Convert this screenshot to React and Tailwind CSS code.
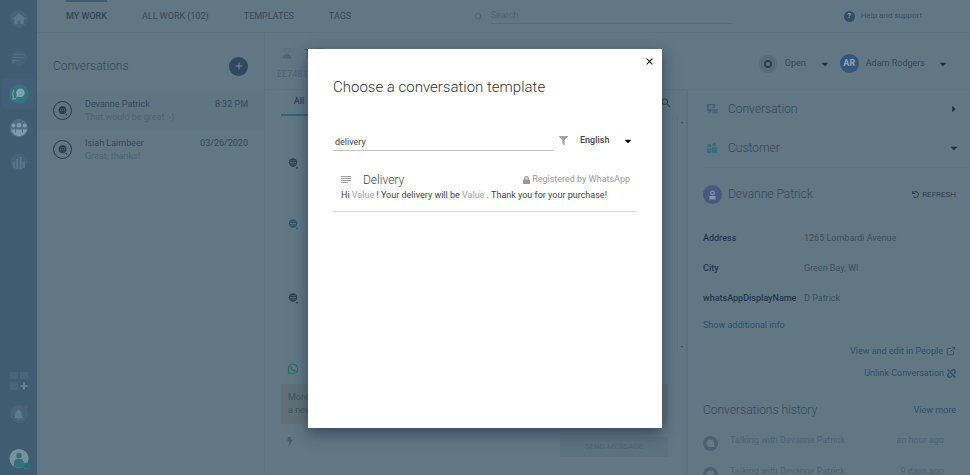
import React, { useState } from 'react';
import { FaCaretDown, FaCaretRight, FaWhatsapp, FaBolt, FaFilter, FaLock, FaUnlink, FaUndo } from 'react-icons/fa';
import { MdHome, MdNotifications, MdClose, MdSearch } from 'react-icons/md';
import { FiSearch, FiExternalLink } from 'react-icons/fi';
import { Plus } from 'lucide-react';

const tabs = ['MY WORK', 'ALL WORK (102)', 'TEMPLATES', 'TAGS'];

const conversations = [
  { name: 'Devanne Patrick', time: '8:32 PM', preview: 'That would be great :-)' },
  { name: 'Isiah Laimbeer', time: '03/26/2020', preview: 'Great, thanks!' },
];

const details = [
  { label: 'Address', value: '1265 Lombardi Avenue' },
  { label: 'City', value: 'Green Bay, WI' },
  { label: 'whatsAppDisplayName', value: 'D Patrick' },
];

const history = [
  { title: 'Talking with Devanne Patrick', when: 'an hour ago' },
  { title: 'Talking with Devanne Patrick', when: '9 days ago' },
];

// globe with a small speech tail
const ChatGlobe = ({ className }) => (
  <svg viewBox="0 0 12 12" className={className} aria-hidden="true">
    <circle cx="5.5" cy="5" r="4.6" fill="currentColor" />
    <circle cx="9.8" cy="10.6" r="1" fill="currentColor" />
    <path d="M1.8 2.900h7.400M1.800 7.200h7.400" stroke="#617784" strokeWidth="0.500" />
    <path d="M2.500 5h1.400M4.800 5h1.400M7.100 5h1.400" stroke="#8094a0" strokeWidth="1" />
  </svg>
);

const Sidebar = () => (
  <nav className="flex w-[37px] shrink-0 flex-col items-center bg-[#3f5d71]">
    <a href="#home" aria-label="Home" className="flex h-[37px] items-center">
      <span className="flex h-[18px] w-[18px] items-center justify-center rounded-full bg-[#46647a]">
        <MdHome className="h-[16px] w-[16px] text-[#5c778b]" />
      </span>
    </a>
    <a href="#messages" aria-label="Messages" className="flex h-[41px] items-center">
      <svg viewBox="0 0 18 18" className="h-[18px] w-[18px]">
        <circle cx="9" cy="9" r="8" fill="#456378" />
        <path d="M4 5.500h11M3 8.500h11M2 11.500h8" stroke="#546f85" strokeWidth="1.200" />
        <path d="M3 12l-1 3 3-2z" fill="#546f85" />
      </svg>
    </a>
    <a href="#conversations" aria-label="Conversations" className="flex h-[31px] w-[33px] items-center justify-center rounded-sm bg-[#435f77]">
      <svg viewBox="0 0 20 20" className="h-5 w-5">
        <circle cx="10" cy="10" r="9.800" fill="#2f777d" />
        <path d="M5 6a7 7 0 0 0-.5 7l-1 2 3.500-.3" fill="none" stroke="#6c98a1" strokeWidth="1.300" />
        <path d="M11.500 4.500a4.300 4.300 0 1 1-2 8.200l-2.500.8.800-2.400A4.300 4.300 0 0 1 11.500 4.500z" fill="#8aa3b2" />
        <circle cx="11.500" cy="8.800" r="2" fill="none" stroke="#6f909d" strokeWidth="0.800" />
      </svg>
    </a>
    <a href="#people" aria-label="People" className="flex h-[37px] items-center">
      <svg viewBox="0 0 20 20" className="h-5 w-5">
        <circle cx="10" cy="10" r="9.200" fill="#506e84" />
        <g fill="#8399a8">
          <circle cx="4.400" cy="7.600" r="2" />
          <circle cx="10" cy="7.200" r="2.300" />
          <circle cx="15.600" cy="7.600" r="2" />
          <path d="M2 11.500h16c-1 4.500-4.600 6.500-8 6.500s-7-2-8-6.500z" />
        </g>
        <path d="M6.500 11.500v3M13.500 11.500v3" stroke="#506e84" />
      </svg>
    </a>
    <a href="#reports" aria-label="Reports" className="flex h-[31px] items-center">
      <svg viewBox="0 0 18 18" className="h-[18px] w-[18px]">
        <circle cx="9" cy="9" r="8.500" fill="#45637a" />
        <path d="M4 15V9M7.300 16V6M10.700 16V4M14 15V8" stroke="#5c788b" strokeWidth="1.600" />
      </svg>
    </a>
    <a href="#apps" aria-label="Add app" className="mt-auto flex h-[22px] items-center">
      <svg viewBox="0 0 20 20" className="h-5 w-5">
        <g fill="#47657b">
          <path d="M1 1h8v7H1zM11 1h8v7h-8zM1 11h8v8H1z" />
        </g>
        <path d="M15 11.500v7M11.500 15h7" stroke="#6f899b" strokeWidth="1.600" />
      </svg>
    </a>
    <a href="#alerts" aria-label="Notifications" className="relative mt-[13px] flex h-[18px] w-[18px] items-center justify-center rounded-full bg-[#46647a]">
      <MdNotifications className="h-[13px] w-[13px] text-[#5f7b8e]" />
      <span className="absolute top-0 right-0 h-[4px] w-[4px] rounded-full bg-[#5a606b]" />
    </a>
    <a href="#profile" aria-label="Profile" className="mt-[25px] mb-[5px] flex h-[22px] items-center">
      <svg viewBox="0 0 22 22" className="h-[22px] w-[22px]">
        <circle cx="11" cy="10.500" r="9.600" fill="#7890a0" />
        <circle cx="11" cy="7.500" r="2.800" fill="#2f7378" />
        <path d="M6 18v-3c0-3 2-4.200 5-4.200s5 1.200 5 4.200v3c-3 2.200-7 2.200-10 0z" fill="#2f7378" />
        <circle cx="18.500" cy="18" r="2.800" fill="#3f5d71" stroke="#2f7378" strokeWidth="1.200" />
      </svg>
    </a>
  </nav>
);

const TopBar = () => (
  <header className="flex h-[33px] shrink-0 items-center border-b border-[#5b7180] pl-[29px] pr-[48px]">
    <nav className="flex h-full gap-[35px]">
      {tabs.map((tab, i) => (
        <a
          key={tab}
          href="#tab"
          className={
            i === 0
              ? 'flex items-center border-t-2 border-[#3d5c72] text-[9px] font-medium text-[#2f4556]'
              : 'flex items-center border-t-2 border-transparent text-[9px] text-[#34495a]'
          }
        >
          {tab}
        </a>
      ))}
    </nav>
    <label className="ml-auto flex items-center gap-2 text-[#465d6d]">
      <FiSearch className="h-[9px] w-[9px]" />
      <input
        type="text"
        aria-label="Search"
        placeholder="Search"
        className="h-[16px] w-[241px] border-b border-[#546c7c] pb-[2px] text-[9px] outline-none placeholder:text-[#4e6575]"
      />
    </label>
    <a href="#help" className="ml-[112px] flex items-center gap-[6px] text-[8px] text-[#3a5060]">
      <span className="flex h-[11px] w-[11px] items-center justify-center rounded-full bg-[#2c5068] text-[8px] font-bold text-[#8da1ae]">?</span>
      Help and support
    </a>
  </header>
);

const ConversationList = () => (
  <section className="w-[228px] shrink-0 border-r border-[#5b7281]">
    <div className="flex h-[57px] items-center justify-between pt-[9px] pl-4 pr-4">
      <h2 className="text-[12px] font-light text-[#34495a]">Conversations</h2>
      <button type="button" aria-label="New conversation" className="flex h-[19px] w-[19px] items-center justify-center rounded-full bg-[#2d4a61]">
        <Plus className="h-[10px] w-[10px] text-[#8599a7]" />
      </button>
    </div>
    <ul className="pt-[1px]">
      {conversations.map((c, i) => (
        <li key={c.name} className={i === 0 ? 'flex h-[39px] items-center bg-[#5f7582] px-4' : 'flex h-[39px] items-center px-4'}>
          <span className="flex h-[19px] w-[19px] shrink-0 items-center justify-center rounded-full border border-[#263a4b] text-[#223647]">
            <ChatGlobe className="h-[10px] w-[10px]" />
          </span>
          <div className="ml-[13px] flex-1 leading-[13px]">
            <div className="flex justify-between text-[9px] text-[#34495a]">
              <span>{c.name}</span>
              <span>{c.time}</span>
            </div>
            <p className="text-[9px] text-[#4b6373]">{c.preview}</p>
          </div>
        </li>
      ))}
    </ul>
  </section>
);

const AgentBar = () => (
  <div className="flex h-[57px] shrink-0 items-center border-b border-[#5d7382] pt-[5px] pl-3 pr-[23px] text-[#33495a]">
    <div className="leading-[20px]">
      <div className="flex items-center gap-3 pl-[5px] text-[12px] font-light">
        <svg viewBox="0 0 10 12" className="h-[11px] w-[10px] text-[#4d6576]" aria-hidden="true">
          <path d="M1.500 1h7C8 4 6.500 5.500 5 6 3.500 5.500 2 4 1.500 1z" fill="none" stroke="currentColor" strokeWidth="0.800" />
          <path d="M0 11.500c.5-3.500 2-5 5-5s4.500 1.500 5 5z" fill="currentColor" />
        </svg>
        Talking
      </div>
      <div className="text-[9px] text-[#4c6474]">EE7481</div>
    </div>
    <button type="button" className="ml-auto flex items-center text-[9px]">
      <span className="mr-2 flex h-[18px] w-[18px] items-center justify-center rounded-full bg-[#596c79]">
        <span className="h-[8px] w-[8px] rounded-full border-2 border-[#2c3e4d] bg-[#617784]" />
      </span>
      Open
      <FaCaretDown className="ml-[15px] h-[10px] w-[8px] text-[#1f3242]" />
    </button>
    <button type="button" className="ml-[11px] flex items-center text-[9px]">
      <span className="mr-[7px] flex h-[19px] w-[19px] items-center justify-center rounded-full bg-[#335877] text-[9px] font-bold text-[#8fa6b6]">AR</span>
      Adam Rodgers
      <FaCaretDown className="ml-[14px] h-[10px] w-[8px] text-[#1f3242]" />
    </button>
  </div>
);

const ChatPane = () => (
  <section className="flex min-w-0 flex-1 text-[9px]">
    <div className="flex min-w-0 flex-1 flex-col pl-4">
      <div className="-mr-1 flex h-[26px] shrink-0 items-center justify-between font-medium text-[#2d4454]">
        <button type="button" className="h-full w-[36px] border-b-2 border-[#35607a]">All</button>
        <MdSearch className="h-[12px] w-[12px]" />
      </div>
      <div className="flex flex-col pt-[42px] pl-[7px]">
        <ChatGlobe className="h-[11px] w-[11px] text-[#2c4152]" />
        <ChatGlobe className="mt-[50px] h-[11px] w-[11px] text-[#2f546f]" />
        <ChatGlobe className="mt-[63px] h-[11px] w-[11px] text-[#2c4152]" />
      </div>
      <FaWhatsapp className="mt-auto ml-[6px] h-[12px] w-[12px] shrink-0 text-[#1d7159]" />
      <div className="mt-[9px] border border-[#607276] bg-[#5f7177] px-[6px] py-[6px] leading-[13px] text-[#41545f]">
        More than 24 hours have passed
        <br />
        a new conversation
      </div>
      <div className="flex items-start justify-between pt-[13px] pb-[18px] pl-[6px]">
        <FaBolt className="h-[8px] w-[6px] text-[#41596a]" />
        <button type="button" disabled className="h-[20px] w-[108px] bg-[#5b7281] text-[8px] text-[#4d6475]">
          SEND MESSAGE
        </button>
      </div>
    </div>
    <div className="mt-[26px] mb-[122px] ml-[9px] flex w-[9px] flex-col items-center justify-between border-l border-[#5c7281] py-[4px] text-[#405869]">
      <FaCaretDown className="h-[5px] w-[4px] rotate-180" />
      <FaCaretDown className="h-[5px] w-[4px]" />
    </div>
  </section>
);

const CustomerPanel = () => (
  <aside className="w-[284px] shrink-0 overflow-hidden border-l-2 border-[#587080] pl-[15px] text-[9px] text-[#33495a]">
    <button type="button" className="flex h-[38px] w-full items-center pr-[13px]">
      <svg viewBox="0 0 13 13" className="ml-[3px] h-[12px] w-[12px]">
        <path d="M1 1h9v4H6v4l-3 2V9H1z" fill="#475d80" />
        <path d="M3 3.500h5M3 5.500h3" stroke="#718796" />
        <path d="M7 6.500h6v4.500h-2l-2 1.500V11H7z" fill="#2f7478" />
      </svg>
      <span className="ml-[10px] text-[12px] font-light">Conversation</span>
      <FaCaretRight className="ml-auto h-[10px] w-[6px] text-[#1f3242]" />
    </button>
    <button type="button" className="flex h-[39px] w-full items-center pr-[12px]">
      <svg viewBox="0 0 13 13" className="ml-[3px] h-[12px] w-[12px]">
        <circle cx="3.500" cy="4" r="2" fill="#3d6580" />
        <circle cx="9" cy="2.500" r="2" fill="#2f7478" />
        <path d="M1 7h5v5H1z" fill="#3d6580" />
        <path d="M6.500 5.500H12V12H6.500z" fill="#2f7478" />
        <path d="M6.300 5v8M1 9h5" stroke="#617784" strokeWidth="0.700" />
      </svg>
      <span className="ml-[10px] text-[12px] font-light">Customer</span>
      <FaCaretDown className="ml-auto h-[10px] w-[8px] text-[#1f3242]" />
    </button>
    <div className="border-t border-[#5e7483] pt-[17px] pr-[14px]">
      <div className="flex items-center">
        <span className="flex h-[19px] w-[19px] items-center justify-center rounded-full bg-[#46597e]">
          <svg viewBox="0 0 9 10" className="h-[10px] w-[9px]" aria-hidden="true">
            <circle cx="4.500" cy="3" r="1.800" fill="none" stroke="#8496a8" strokeWidth="1.200" />
            <path d="M1.500 6h6v3.500h-6z" fill="#8496a8" />
          </svg>
        </span>
        <h3 className="ml-[6px] text-[12px] leading-[19px] font-light">Devanne Patrick</h3>
        <button type="button" className="ml-auto flex items-center gap-[3px] text-[8px] text-[#2c4152]">
          <FaUndo className="h-[7px] w-[7px]" />
          REFRESH
        </button>
      </div>
      <dl className="mt-[20px]">
        {details.map((d) => (
          <div key={d.label} className="flex h-[30px] items-center">
            <dt className="w-[101px] font-medium text-[#22384a]">{d.label}</dt>
            <dd className="text-[#3a5060]">{d.value}</dd>
          </div>
        ))}
      </dl>
      <a href="#more" className="mt-[4px] block leading-[14px] text-[#2c516b]">Show additional info</a>
      <div className="mt-[12px] flex flex-col items-end gap-2 leading-[14px] text-[#2c516b]">
        <a href="#people" className="flex items-center gap-[3px]">
          View and edit in People
          <FiExternalLink className="h-[10px] w-[10px]" />
        </a>
        <a href="#unlink" className="flex items-center gap-[3px]">
          Unlink Conversation
          <FaUnlink className="h-[9px] w-[9px]" />
        </a>
      </div>
      <div className="mt-5 flex items-center justify-between leading-[20px]">
        <h3 className="text-[12px] font-light">Conversations history</h3>
        <a href="#history" className="text-[#2c516b]">View more</a>
      </div>
      <ul className="mt-[13px] text-[#4b6373]">
        {history.map((h) => (
          <li key={h.when} className="flex h-[31px] items-start pr-[12px] leading-[14px]">
            <span className="mt-[3px] flex h-[15px] w-[15px] items-center justify-center rounded-full bg-[#4b6071]">
              <svg viewBox="0 0 9 9" className="h-[9px] w-[9px]" aria-hidden="true">
                <path d="M4.500.5a3.800 3.800 0 0 1 3.800 3.800L8.500 8 5 8A3.800 3.800 0 1 1 4.500.5z" fill="#647a88" />
              </svg>
            </span>
            <span className="ml-3">{h.title}</span>
            <span className="ml-auto">{h.when}</span>
          </li>
        ))}
      </ul>
    </div>
  </aside>
);

const TemplateDialog = () => {
  const [query, setQuery] = useState('delivery');

  return (
    <div
      role="dialog"
      aria-labelledby="dialog-title"
      className="min-h-[379px] w-full max-w-[354px] bg-white pl-[25px] pr-[25px] text-[#444] shadow-[0_5px_14px_rgba(20,40,60,0.6)]"
    >
      <div className="-mr-[18px] flex justify-end pt-[7px]">
        <button type="button" aria-label="Close">
          <MdClose className="h-[11px] w-[11px] text-black" />
        </button>
      </div>
      <h1 id="dialog-title" className="mt-[10px] text-[15px] leading-[20px] font-light text-[#333]">
        Choose a conversation template
      </h1>
      <div className="mt-[34px] flex items-start">
        <input
          type="text"
          aria-label="Search templates"
          value={query}
          onChange={(e) => setQuery(e.target.value)}
          className="mt-1 h-[16px] min-w-0 flex-1 border-b border-[#c4c4c4] px-[2px] text-[9px] outline-none"
        />
        <FaFilter className="mt-[5px] ml-[5px] h-[9px] w-[9px] text-[#a3a3a3]" />
        <div className="relative ml-3 flex w-[57px] items-center">
          <select aria-label="Language" className="h-[20px] w-full appearance-none text-[9px] font-medium outline-none">
            <option>English</option>
          </select>
          <FaCaretDown className="pointer-events-none absolute right-[5px] h-[10px] w-[8px] text-black" />
        </div>
      </div>
      <div className="mt-[21px] border-b border-[#dcdcdc] pb-[9px] pl-2 pr-[7px]">
        <div className="flex h-[16px] items-center">
          <svg viewBox="0 0 10 8" className="h-[8px] w-[10px]" aria-hidden="true">
            <path d="M0 .5h10M0 2.500h10M0 4.500h10M0 6.500h7" stroke="#a0a0a0" strokeWidth="1" />
          </svg>
          <h2 className="ml-3 text-[12px] font-light">Delivery</h2>
          <span className="ml-auto flex items-center gap-[2px] text-[9px] text-[#999]">
            <FaLock className="h-[8px] w-[7px]" />
            Registered by WhatsApp
          </span>
        </div>
        <p className="text-[9px] leading-[14px]">
          Hi <span className="bg-[#f7f7f7] text-[#aaa]">Value</span> ! Your delivery will be{' '}
          <span className="bg-[#f7f7f7] text-[#aaa]">Value</span> . Thank you for your purchase!
        </p>
      </div>
    </div>
  );
};

const App = () => {
  return (
    <div className="relative flex h-screen overflow-hidden bg-[#617784] font-[Roboto,'Liberation_Sans',sans-serif]">
      <Sidebar />
      <div className="flex min-w-0 flex-1 flex-col">
        <TopBar />
        <div className="flex min-h-0 flex-1">
          <ConversationList />
          <div className="flex min-w-0 flex-1 flex-col">
            <AgentBar />
            <div className="flex min-h-0 flex-1">
              <ChatPane />
              <CustomerPanel />
            </div>
          </div>
        </div>
      </div>
      <div className="absolute inset-0 flex items-center justify-center pt-[1px]">
        <TemplateDialog />
      </div>
    </div>
  );
};

export default App;
